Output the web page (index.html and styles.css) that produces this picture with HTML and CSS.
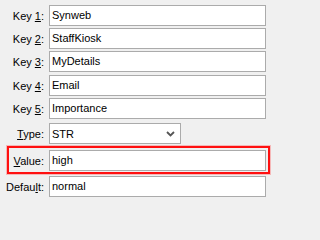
FILE: index.html
```html
<!DOCTYPE html>
<html>
<head>
<meta charset="utf-8">
<link rel="stylesheet" href="styles.css">
</head>
<body>
<div class="form">
  <div class="row"><label class="lbl">Key <u>1</u>:</label><div class="field">Synweb</div></div>
  <div class="row"><label class="lbl">Key <u>2</u>:</label><div class="field">StaffKiosk</div></div>
  <div class="row"><label class="lbl">Key <u>3</u>:</label><div class="field">MyDetails</div></div>
  <div class="row r4"><label class="lbl">Key <u>4</u>:</label><div class="field">Email</div></div>
  <div class="row"><label class="lbl">Key <u>5</u>:</label><div class="field">Importance</div></div>
  <div class="row rsel"><label class="lbl"><u>T</u>ype:</label>
    <div class="select"><span>STR</span>
      <svg class="chev" width="9" height="6" viewBox="0 0 9 6"><path d="M1 1 L4.5 4.5 L8 1" fill="none" stroke="#555" stroke-width="1.8"/></svg>
    </div>
  </div>
  <div class="row rval"><div class="hl"></div><label class="lbl"><u>V</u>alue:</label><div class="field">high</div></div>
  <div class="row"><label class="lbl">Defau<u>l</u>t:</label><div class="field">normal</div></div>
</div>
</body>
</html>
```
FILE: styles.css
```css
html, body {
  margin: 0;
  padding: 0;
  background: #f0f0f0;
  width: 271px;
  height: 202px;
  overflow: hidden;
  font-family: "Liberation Sans", Arial, sans-serif;
  font-size: 11px;
  color: #000;
}
.form {
  display: flex;
  flex-direction: column;
  gap: 2px;
  padding-top: 5px;
}
.row {
  position: relative;
  display: grid;
  grid-template-columns: 44px auto;
  column-gap: 5px;
  align-items: center;
  height: 21px;
}
.r4 { margin-top: 1px; }
.rsel { margin-top: 2px; }
.rval { margin: 4px 0 3px; }
.lbl {
  text-align: right;
  white-space: nowrap;
  color: #000;
}
.lbl u { text-decoration-thickness: 1px; text-underline-offset: 1px; }
.field {
  box-sizing: border-box;
  width: 217px;
  height: 21px;
  line-height: 19px;
  border: 1px solid #ababab;
  background: #fff;
  padding: 0 2px;
  white-space: nowrap;
}
.select {
  box-sizing: border-box;
  width: 132px;
  height: 21px;
  border: 1px solid #ababab;
  background: #fff;
  padding: 0 2px;
  display: flex;
  align-items: center;
  justify-content: space-between;
}
.chev { margin-right: 3px; }
.hl {
  position: absolute;
  left: 7px;
  top: -4px;
  width: 263px;
  height: 28px;
  box-sizing: border-box;
  border: 2px solid #ff1010;
  box-shadow: 0 0 0 1px rgba(255, 80, 80, 0.35);
}
```
